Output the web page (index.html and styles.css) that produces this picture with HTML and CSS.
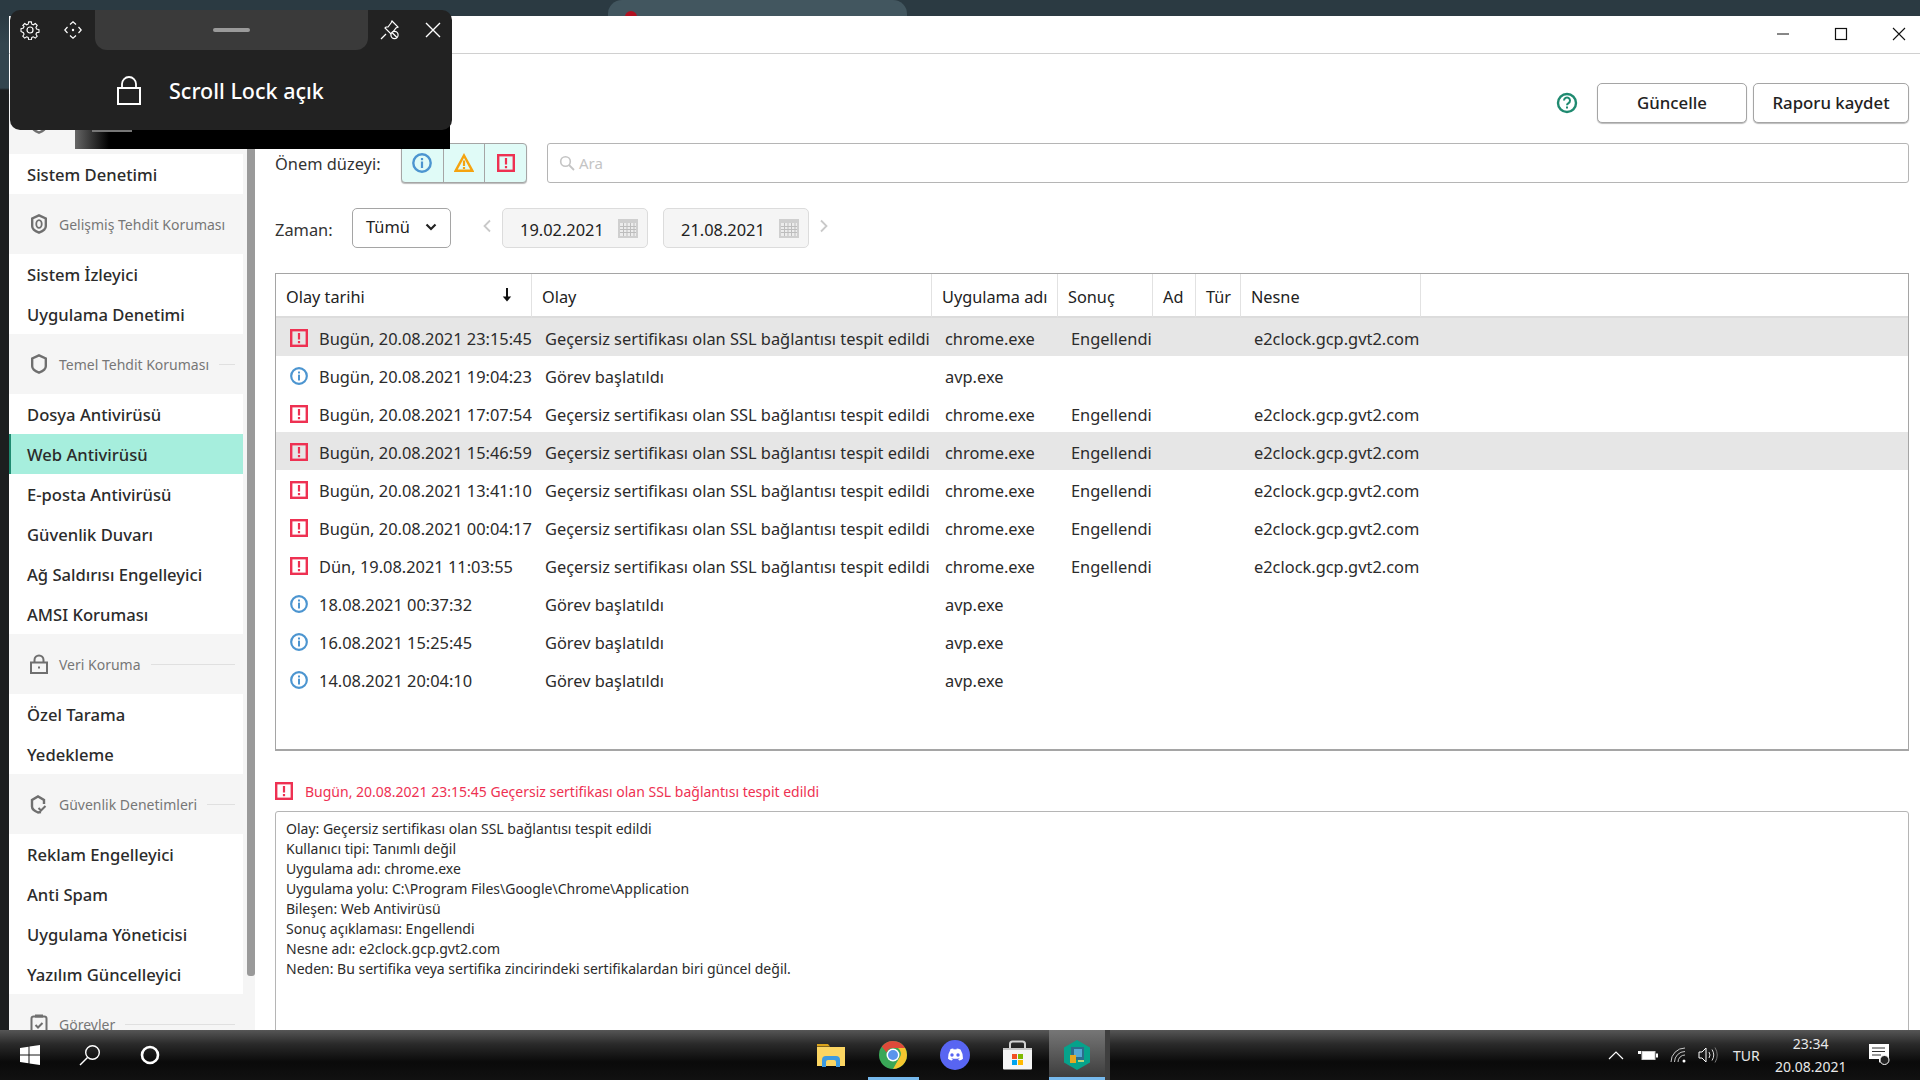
FILE: index.html
```html
<!DOCTYPE html>
<html lang="tr">
<head>
  <meta charset="UTF-8" />
  <title>Raporlar</title>
  <link rel="stylesheet" href="styles.css">
</head>
<body>
  <svg class="defs" width="0" height="0">
    <symbol id="i-err" viewBox="0 0 18 18">
      <rect x="1.200" y="1.200" width="15.600" height="15.600" fill="none" stroke="#ee3152" stroke-width="2.400"/>
      <rect x="7.900" y="4" width="2.200" height="6.500" fill="#ee3152"/>
      <rect x="7.900" y="12" width="2.200" height="2.200" fill="#ee3152"/>
    </symbol>
    <symbol id="i-info" viewBox="0 0 20 20">
      <circle cx="10" cy="10" r="8.700" fill="none" stroke="#4c95d0" stroke-width="2.400"/>
      <rect x="8.900" y="8.500" width="2.200" height="6.500" fill="#4c95d0"/>
      <rect x="8.900" y="5" width="2.200" height="2.200" fill="#4c95d0"/>
    </symbol>
    <symbol id="i-warn" viewBox="0 0 20 20">
      <path d="M10 2.500 18.400 17.800H1.600Z" fill="none" stroke="#f5a30f" stroke-width="2.400"/>
      <rect x="8.900" y="7.500" width="2.200" height="5.500" fill="#f5a30f"/>
      <rect x="8.900" y="14" width="2.200" height="2" fill="#f5a30f"/>
    </symbol>
    <symbol id="i-cal" viewBox="0 0 20 20">
      <path d="M0 1h20v19H0z" fill="#cfcfcf"/>
      <path d="M2 5h16v13H2z" fill="#ececec"/>
      <path d="M5.500 5v13M9 5v13M12.500 5v13M16 5v13M2 8.500h16M2 11.500h16M2 14.500h16" stroke="#bdbdbd" stroke-width="1"/>
    </symbol>
    <symbol id="i-shield" viewBox="0 0 18 22">
      <path d="M9 1.500 16.500 5v8.500c0 3-3.500 5.500-7.500 7-4-1.500-7.500-4-7.500-7V5Z" fill="none" stroke="#6f6f6f" stroke-width="2.600"/>
    </symbol>
  </svg>

  <div class="desktop">
    <div class="ghost-tab"><span class="ghost-icon"></span></div>
    <div class="window">
      <div class="titlebar">
        <svg class="win-btn" width="14" height="14" viewBox="0 0 14 14"><path d="M1 7h12" stroke="#111" stroke-width="1"/></svg>
        <svg class="win-btn" width="14" height="14" viewBox="0 0 14 14"><rect x="1.500" y="1.500" width="11" height="11" fill="none" stroke="#111" stroke-width="1.200"/></svg>
        <svg class="win-btn" width="14" height="14" viewBox="0 0 14 14"><path d="M1 1l12 12M13 1 1 13" stroke="#111" stroke-width="1.100"/></svg>
      </div>
      <div class="win-body">
        <nav class="sidebar">
          <div class="nav-list">
            <div class="nav-head">
              <svg class="nav-icon" viewBox="0 0 18 22"><use href="#i-shield"/></svg>
            </div>
            <div class="nav-item">Sistem Denetimi</div>
            <div class="nav-head">
              <svg class="nav-icon" viewBox="0 0 18 22">
                <path d="M9 1.500 16.500 5v8.500c0 3-3.500 5.500-7.500 7-4-1.500-7.500-4-7.500-7V5Z" fill="none" stroke="#6f6f6f" stroke-width="2.600"/>
                <ellipse cx="9" cy="11" rx="3" ry="4.200" fill="none" stroke="#6f6f6f" stroke-width="2"/>
              </svg>
              <span>Gelişmiş Tehdit Koruması</span>
            </div>
            <div class="nav-item">Sistem İzleyici</div>
            <div class="nav-item">Uygulama Denetimi</div>
            <div class="nav-head">
              <svg class="nav-icon" viewBox="0 0 18 22"><use href="#i-shield"/></svg>
              <span>Temel Tehdit Koruması</span><i></i>
            </div>
            <div class="nav-item">Dosya Antivirüsü</div>
            <div class="nav-item active">Web Antivirüsü</div>
            <div class="nav-item">E-posta Antivirüsü</div>
            <div class="nav-item">Güvenlik Duvarı</div>
            <div class="nav-item">Ağ Saldırısı Engelleyici</div>
            <div class="nav-item">AMSI Koruması</div>
            <div class="nav-head">
              <svg class="nav-icon" viewBox="0 0 18 20">
                <path d="M4.500 9V6a4.500 4.500 0 0 1 9 0v3" fill="none" stroke="#6f6f6f" stroke-width="2"/>
                <path d="M1 8.500h16V19H1z" fill="none" stroke="#6f6f6f" stroke-width="2"/>
                <rect x="8" y="12.500" width="2" height="2" fill="#6f6f6f"/>
              </svg>
              <span>Veri Koruma</span><i></i>
            </div>
            <div class="nav-item">Özel Tarama</div>
            <div class="nav-item">Yedekleme</div>
            <div class="nav-head">
              <svg class="nav-icon" viewBox="0 0 18 20">
                <path d="M11 18 8 18.500C4.500 17 2 15 2 12.500V6l6-3.500L14 6v4" fill="none" stroke="#6f6f6f" stroke-width="2.400"/>
                <path d="M8.500 14l2.500 2.500 4.500-4.500" fill="none" stroke="#6f6f6f" stroke-width="2"/>
              </svg>
              <span>Güvenlik Denetimleri</span><i></i>
            </div>
            <div class="nav-item">Reklam Engelleyici</div>
            <div class="nav-item">Anti Spam</div>
            <div class="nav-item">Uygulama Yöneticisi</div>
            <div class="nav-item">Yazılım Güncelleyici</div>
            <div class="nav-head">
              <svg class="nav-icon" viewBox="0 0 18 20">
                <rect x="1.500" y="2.500" width="15" height="16.500" rx="2" fill="none" stroke="#6f6f6f" stroke-width="2"/>
                <rect x="5" y="0.500" width="8" height="3" fill="#6f6f6f"/>
                <path d="M5.500 11l2.500 2.500 4.500-4.500" fill="none" stroke="#6f6f6f" stroke-width="2"/>
              </svg>
              <span>Görevler</span><i></i>
            </div>
          </div>
          <div class="scrollbar"><div class="scroll-thumb"></div></div>
        </nav>

        <main class="content">
          <div class="actions">
            <svg class="help" width="22" height="22" viewBox="0 0 22 22">
              <circle cx="11" cy="11" r="9" fill="none" stroke="#1f8a70" stroke-width="2.400"/>
              <path d="M8 8.500a3 3 0 1 1 4.500 2.600c-1 .6-1.500 1-1.500 2.200" fill="none" stroke="#1f8a70" stroke-width="2"/>
              <rect x="10" y="14.500" width="2" height="2" fill="#1f8a70"/>
            </svg>
            <button class="btn btn-update">Güncelle</button>
            <button class="btn btn-save">Raporu kaydet</button>
          </div>

          <div class="filter-row">
            <span class="label label-level">Önem düzeyi:</span>
            <div class="levels">
              <div class="level"><svg width="20" height="20"><use href="#i-info"/></svg></div>
              <div class="level"><svg width="20" height="20"><use href="#i-warn"/></svg></div>
              <div class="level"><svg width="18" height="18"><use href="#i-err"/></svg></div>
            </div>
            <div class="search">
              <svg width="16" height="16" viewBox="0 0 16 16"><circle cx="6.500" cy="6.500" r="4.800" fill="none" stroke="#c4c4c4" stroke-width="1.600"/><path d="M10 10l5 5" stroke="#c4c4c4" stroke-width="1.800"/></svg>
              <span>Ara</span>
            </div>
          </div>

          <div class="time-row">
            <span class="label label-time">Zaman:</span>
            <div class="select">
              <span>Tümü</span>
              <svg width="12" height="8" viewBox="0 0 12 8"><path d="M1.500 1.500 6 6l4.500-4.500" fill="none" stroke="#222" stroke-width="2.200"/></svg>
            </div>
            <svg class="chev" width="10" height="14" viewBox="0 0 10 14"><path d="M8 1.500 2.500 7 8 12.500" fill="none" stroke="#c9c9c9" stroke-width="1.800"/></svg>
            <div class="date"><span>19.02.2021</span><svg width="20" height="20"><use href="#i-cal"/></svg></div>
            <div class="date"><span>21.08.2021</span><svg width="20" height="20"><use href="#i-cal"/></svg></div>
            <svg class="chev" width="10" height="14" viewBox="0 0 10 14"><path d="M2 1.500 7.500 7 2 12.500" fill="none" stroke="#c9c9c9" stroke-width="1.800"/></svg>
          </div>

          <div class="table-box">
            <table class="events">
              <colgroup>
                <col class="c-date"><col class="c-event"><col class="c-app"><col class="c-result"><col class="c-ad"><col class="c-type"><col class="c-object"><col>
              </colgroup>
              <thead>
                <tr>
                  <th class="th-date">Olay tarihi
                    <svg class="sort" width="12" height="16" viewBox="0 0 12 16"><path d="M6 1v12" stroke="#111" stroke-width="2"/><path d="M1.800 9.500 6 14.500l4.200-5z" fill="#111"/></svg>
                  </th>
                  <th>Olay</th><th>Uygulama adı</th><th>Sonuç</th><th>Ad</th><th>Tür</th><th>Nesne</th><th class="th-rest"></th>
                </tr>
              </thead>
              <tbody>
                <tr class="sel">
                  <td class="td-date"><svg width="18" height="18"><use href="#i-err"/></svg>Bugün, 20.08.2021 23:15:45</td>
                  <td>Geçersiz sertifikası olan SSL bağlantısı tespit edildi</td><td>chrome.exe</td><td>Engellendi</td><td></td><td></td><td>e2clock.gcp.gvt2.com</td><td></td>
                </tr>
                <tr>
                  <td class="td-date"><svg width="18" height="18" viewBox="0 0 20 20"><use href="#i-info"/></svg>Bugün, 20.08.2021 19:04:23</td>
                  <td>Görev başlatıldı</td><td>avp.exe</td><td></td><td></td><td></td><td></td><td></td>
                </tr>
                <tr>
                  <td class="td-date"><svg width="18" height="18"><use href="#i-err"/></svg>Bugün, 20.08.2021 17:07:54</td>
                  <td>Geçersiz sertifikası olan SSL bağlantısı tespit edildi</td><td>chrome.exe</td><td>Engellendi</td><td></td><td></td><td>e2clock.gcp.gvt2.com</td><td></td>
                </tr>
                <tr class="sel">
                  <td class="td-date"><svg width="18" height="18"><use href="#i-err"/></svg>Bugün, 20.08.2021 15:46:59</td>
                  <td>Geçersiz sertifikası olan SSL bağlantısı tespit edildi</td><td>chrome.exe</td><td>Engellendi</td><td></td><td></td><td>e2clock.gcp.gvt2.com</td><td></td>
                </tr>
                <tr>
                  <td class="td-date"><svg width="18" height="18"><use href="#i-err"/></svg>Bugün, 20.08.2021 13:41:10</td>
                  <td>Geçersiz sertifikası olan SSL bağlantısı tespit edildi</td><td>chrome.exe</td><td>Engellendi</td><td></td><td></td><td>e2clock.gcp.gvt2.com</td><td></td>
                </tr>
                <tr>
                  <td class="td-date"><svg width="18" height="18"><use href="#i-err"/></svg>Bugün, 20.08.2021 00:04:17</td>
                  <td>Geçersiz sertifikası olan SSL bağlantısı tespit edildi</td><td>chrome.exe</td><td>Engellendi</td><td></td><td></td><td>e2clock.gcp.gvt2.com</td><td></td>
                </tr>
                <tr>
                  <td class="td-date"><svg width="18" height="18"><use href="#i-err"/></svg>Dün, 19.08.2021 11:03:55</td>
                  <td>Geçersiz sertifikası olan SSL bağlantısı tespit edildi</td><td>chrome.exe</td><td>Engellendi</td><td></td><td></td><td>e2clock.gcp.gvt2.com</td><td></td>
                </tr>
                <tr>
                  <td class="td-date"><svg width="18" height="18" viewBox="0 0 20 20"><use href="#i-info"/></svg>18.08.2021 00:37:32</td>
                  <td>Görev başlatıldı</td><td>avp.exe</td><td></td><td></td><td></td><td></td><td></td>
                </tr>
                <tr>
                  <td class="td-date"><svg width="18" height="18" viewBox="0 0 20 20"><use href="#i-info"/></svg>16.08.2021 15:25:45</td>
                  <td>Görev başlatıldı</td><td>avp.exe</td><td></td><td></td><td></td><td></td><td></td>
                </tr>
                <tr>
                  <td class="td-date"><svg width="18" height="18" viewBox="0 0 20 20"><use href="#i-info"/></svg>14.08.2021 20:04:10</td>
                  <td>Görev başlatıldı</td><td>avp.exe</td><td></td><td></td><td></td><td></td><td></td>
                </tr>
              </tbody>
            </table>
          </div>

          <div class="detail-title">
            <svg width="18" height="18"><use href="#i-err"/></svg>
            <span>Bugün, 20.08.2021 23:15:45 Geçersiz sertifikası olan SSL bağlantısı tespit edildi</span>
          </div>
          <div class="detail-box">
            <div>Olay: Geçersiz sertifikası olan SSL bağlantısı tespit edildi</div>
            <div>Kullanıcı tipi: Tanımlı değil</div>
            <div>Uygulama adı: chrome.exe</div>
            <div>Uygulama yolu: C:\Program Files\Google\Chrome\Application</div>
            <div>Bileşen: Web Antivirüsü</div>
            <div>Sonuç açıklaması: Engellendi</div>
            <div>Nesne adı: e2clock.gcp.gvt2.com</div>
            <div>Neden: Bu sertifika veya sertifika zincirindeki sertifikalardan biri güncel değil.</div>
          </div>
        </main>
      </div>
    </div>
  </div>

  <div class="taskbar">
    <div class="tb-left">
      <svg class="tb-start" width="20" height="20" viewBox="0 0 20 20"><path d="M0 3l8.500-1.200v7.700H0zM9.500 1.600 20 0v9.500H9.500zM0 10.500h8.500v7.700L0 17zM9.500 10.500H20V20L9.500 18.400z" fill="#fff"/></svg>
      <svg class="tb-search" width="22" height="22" viewBox="0 0 22 22"><circle cx="13.500" cy="8.500" r="6.800" fill="none" stroke="#fff" stroke-width="1.400"/><path d="M8.500 13.500 1 21" stroke="#fff" stroke-width="1.500"/></svg>
      <svg class="tb-cortana" width="20" height="20" viewBox="0 0 20 20"><circle cx="10" cy="10" r="8" fill="none" stroke="#fff" stroke-width="2.600"/></svg>
    </div>
    <div class="tb-apps">
      <div class="tb-app">
        <svg width="28" height="24" viewBox="0 0 28 24">
          <path d="M0 1h11l2 2.500H0z" fill="#d9a21b"/>
          <rect x="0" y="4" width="28" height="19" fill="#fbd562"/>
          <path d="M5 24v-7q0-4 4-4h10q4 0 4 4v7h-4v-5q0-2-2-2h-6q-2 0-2 2v5z" fill="#3d9ae0"/>
        </svg>
      </div>
      <div class="tb-app open">
        <svg width="28" height="28" viewBox="0 0 28 28">
          <circle cx="14" cy="14" r="14" fill="#3aa757"/>
          <path d="M14 0a14 14 0 0 1 12.100 7H14a7 7 0 0 0-6.500 4.400L2.800 5.600A14 14 0 0 1 14 0z" fill="#de4a3a"/>
          <path d="M26.100 7A14 14 0 0 1 14 28l6-10.500A7 7 0 0 0 19 7z" fill="#f6c62f"/>
          <circle cx="14" cy="14" r="6.500" fill="#fff"/>
          <circle cx="14" cy="14" r="5" fill="#5a95ec"/>
        </svg>
      </div>
      <div class="tb-app">
        <svg width="30" height="30" viewBox="0 0 30 30">
          <circle cx="15" cy="15" r="15" fill="#5865f2"/>
          <path d="M9.500 9.500q2.500-1.100 3.700-1.100l.5 1q1.300-.2 2.600 0l.5-1q1.300 0 3.700 1.100 2.400 3.600 2.500 9.300-1.700 1.400-3.900 1.800l-1-1.500 1.600-.9-.4-.3q-3.800 1.700-7.600 0l-.4.3 1.600.9-1 1.500q-2.200-.4-3.900-1.800.1-5.700 2.500-9.300z" fill="#fff"/>
          <circle cx="12" cy="15" r="1.700" fill="#5865f2"/>
          <circle cx="18" cy="15" r="1.700" fill="#5865f2"/>
        </svg>
      </div>
      <div class="tb-app">
        <svg width="29" height="30" viewBox="0 0 29 30">
          <path d="M7 9V4q0-2.500 2.500-2.500h10q2.500 0 2.500 2.500v5" fill="none" stroke="#d2d2d2" stroke-width="2"/>
          <path d="M0 9h29v19.500q0 1-1 1H1q-1 0-1-1z" fill="#f5f5f5"/>
          <rect x="0" y="8" width="29" height="2" fill="#c8c8c8"/>
          <rect x="9" y="14" width="5" height="5" fill="#f25022"/>
          <rect x="15" y="14" width="5" height="5" fill="#7fba00"/>
          <rect x="9" y="20" width="5" height="5" fill="#00a4ef"/>
          <rect x="15" y="20" width="5" height="5" fill="#ffb900"/>
        </svg>
      </div>
      <div class="tb-app active">
        <svg width="28" height="30" viewBox="0 0 28 30">
          <path d="M14 0 27 7.500v15L14 30 1 22.500v-15z" fill="#06a28b"/>
          <rect x="8" y="7" width="13" height="13" fill="#2c6d8c"/>
          <rect x="11" y="9" width="8" height="8" fill="#56a9d4"/>
          <rect x="7" y="15" width="6" height="8" fill="#e5a823"/>
          <rect x="15" y="20" width="6" height="2" fill="#b7d27a"/>
        </svg>
      </div>
    </div>
    <div class="tray">
      <svg class="tray-chev" width="16" height="10" viewBox="0 0 16 10"><path d="M1 9l7-7 7 7" fill="none" stroke="#fff" stroke-width="1.200"/></svg>
      <svg class="tray-bat" width="20" height="12" viewBox="0 0 20 12"><rect x="4" y="2.500" width="13" height="8" fill="#fff" stroke="#ccc"/><rect x="18" y="4.500" width="2" height="4" fill="#fff"/><path d="M0 2h3v3H0z" fill="#fff"/></svg>
      <svg class="tray-wifi" width="18" height="16" viewBox="0 0 18 16"><path d="M1 15A14 14 0 0 1 15 1M4.500 15A10.500 10.500 0 0 1 15 4.500M8 15a7 7 0 0 1 7-7" fill="none" stroke="#c8c8c8" stroke-width="1"/><circle cx="14" cy="14" r="1.500" fill="#fff"/></svg>
      <svg class="tray-vol" width="20" height="16" viewBox="0 0 20 16"><path d="M1 5h3l4-4v14l-4-4H1z" fill="none" stroke="#fff" stroke-width="1"/><path d="M11 5q2 3 0 6M14 2.500q3.500 5.500 0 11" fill="none" stroke="#ddd" stroke-width="1"/><path d="M17 .5q4.500 7.500 0 15" fill="none" stroke="#777" stroke-width="1"/></svg>
      <span class="tray-lang">TUR</span>
      <div class="clock"><span>23:34</span><span>20.08.2021</span></div>
      <svg class="tray-note" width="21" height="22" viewBox="0 0 21 22"><path d="M0 0h20v15H13l-3 4v-4H0z" fill="#fff"/><path d="M3 4h13M3 7.500h13M3 11h9" stroke="#333" stroke-width="1"/><circle cx="15.500" cy="16" r="4.500" fill="#222" stroke="#fff" stroke-width="1"/></svg>
    </div>
  </div>

  <div class="black-bar"></div>
  <div class="lock-flyout">
    <div class="fly-top">
      <svg class="fly-gear" width="20" height="20" viewBox="0 0 20 20">
        <path d="M8.500 1h3l.5 2.500 1.700.7L15.900 2.800l2.100 2.100-1.400 2.200.7 1.700 2.700.7v3l-2.700.5-.7 1.700 1.400 2.200-2.100 2.100-2.200-1.400-1.700.7-.5 2.500h-3l-.5-2.500-1.700-.7-2.200 1.400-2.100-2.100 1.400-2.200-.7-1.700L0 11.500v-3l2.700-.7.7-1.700L2 4.900 4.100 2.800l2.200 1.400L8 3.500z" fill="none" stroke="#fff" stroke-width="1.200" transform="translate(1 1) scale(.9)"/>
        <circle cx="10" cy="10" r="3" fill="none" stroke="#fff" stroke-width="1.200"/>
      </svg>
      <svg class="fly-move" width="18" height="18" viewBox="0 0 18 18">
        <path d="M6 3.500 9 .8l3 2.700M3.500 6 .8 9l2.700 3M14.500 6 17.200 9l-2.700 3M6 14.500l3 2.700 3-2.700" fill="none" stroke="#fff" stroke-width="1.200"/>
        <circle cx="9" cy="9" r="1.200" fill="#fff"/>
      </svg>
      <div class="fly-handle"><div class="grip"></div></div>
      <svg class="fly-pin" width="20" height="20" viewBox="0 0 20 20">
        <path d="M12 1l6 6-2 1-3 4v2l-1 1-7-7 1-1h2l3-4z" fill="none" stroke="#fff" stroke-width="1.200"/>
        <path d="M1 19l5-5" stroke="#fff" stroke-width="1.200"/>
        <circle cx="14.500" cy="15" r="3.600" fill="#222" stroke="#fff" stroke-width="1.200"/>
        <path d="M12 12.500l5 5" stroke="#fff" stroke-width="1.200"/>
      </svg>
      <svg class="fly-close" width="16" height="16" viewBox="0 0 16 16"><path d="M1 1l14 14M15 1 1 15" stroke="#fff" stroke-width="1.400"/></svg>
    </div>
    <div class="fly-msg">
      <svg width="24" height="30" viewBox="0 0 24 30">
        <path d="M5 14V9a7 7 0 0 1 14 0v5" fill="none" stroke="#fff" stroke-width="1.800"/>
        <rect x="1" y="13" width="22" height="16" fill="none" stroke="#fff" stroke-width="2"/>
      </svg>
      <span>Scroll Lock açık</span>
    </div>
  </div>
</body>
</html>
```

FILE: styles.css
```css
* {
  box-sizing: border-box;
}

html, body {
  margin: 0;
  height: 100%;
}

body {
  width: 1920px;
  height: 1080px;
  overflow: hidden;
  display: flex;
  flex-direction: column;
  background-color: #1c1e1f;
  font-family: "Noto Sans", "Open Sans", sans-serif;
  color: #222;
}

.defs {
  position: absolute;
}

/* desktop + app window */
.desktop {
  height: 1030px;
  padding: 16px 0 0 9px;
  position: relative;
  background: linear-gradient(180deg, #2b3a42 0, #2b3a42 16px, #33454e 44px, #33454e 88px, #1c1e1f 90px);
}

.ghost-tab {
  position: absolute;
  left: 608px;
  top: 0;
  width: 299px;
  height: 16px;
  background-color: #42565f;
  border-radius: 14px 14px 0 0;
  overflow: hidden;
}

.ghost-icon {
  position: absolute;
  left: 17px;
  top: 11px;
  width: 12px;
  height: 12px;
  border-radius: 50%;
  background-color: #b01020;
}

.window {
  position: relative;
  height: 1014px;
  background-color: #fff;
  display: flex;
  flex-direction: column;
  overflow: hidden;
}

.titlebar {
  height: 38px;
  flex-shrink: 0;
  border-bottom: 1px solid #d0d0d0;
  display: flex;
  justify-content: flex-end;
  align-items: center;
  gap: 44px;
  padding: 0 14px 2px 0;
}

.win-body {
  flex: 1;
  display: flex;
  min-height: 0;
}

/* left menu */
.sidebar {
  width: 246px;
  flex-shrink: 0;
  display: flex;
  background-color: #f5f5f5;
  overflow: hidden;
}

.nav-list {
  width: 234px;
  padding-top: 40px;
  background-color: #fff;
}

.nav-item {
  height: 40px;
  padding-left: 18px;
  display: flex;
  align-items: center;
  font-size: 16.600px;
  font-weight: 500;
  color: #2b2b2b;
}

.nav-item.active {
  background-color: #a6eedd;
  border-left: 2px solid #1f8a70;
  padding-left: 16px;
}

.nav-head {
  height: 60px;
  padding: 0 8px 0 21px;
  background-color: #f5f5f5;
  display: flex;
  align-items: center;
  font-size: 14px;
  color: #777;
}

.nav-icon {
  width: 18px;
  height: 20px;
  flex-shrink: 0;
  margin-right: 11px;
}

.nav-head i {
  flex: 1;
  height: 1px;
  margin-left: 10px;
  background-color: #e0e0e0;
}

.scrollbar {
  width: 12px;
  padding: 0 0 0 4px;
}

.scroll-thumb {
  width: 8px;
  height: 922px;
  background-color: #9a9a9a;
  border-radius: 0 0 3px 3px;
}

/* main part */
.content {
  flex: 1;
  min-width: 0;
  padding: 29px 11px 0 20px;
  overflow: hidden;
}

.actions {
  height: 40px;
  display: flex;
  justify-content: flex-end;
  align-items: center;
  gap: 6px;
}

.help {
  margin-right: 13px;
}

.btn {
  height: 40px;
  padding-bottom: 3px;
  background-color: #fff;
  border: 1px solid #a5a5a5;
  border-radius: 5px;
  box-shadow: 0 1px 1px #bbb;
  font-family: inherit;
  font-size: 16.800px;
  font-weight: 500;
  color: #222;
}

.btn-update {
  width: 150px;
}

.btn-save {
  width: 156px;
}

.label {
  font-size: 16.400px;
  color: #333;
  flex-shrink: 0;
}

.filter-row {
  margin-top: 20px;
  height: 40px;
  display: flex;
  align-items: center;
}

.label-level {
  width: 126px;
}

.levels {
  width: 126px;
  height: 40px;
  display: flex;
  background-color: #e0fbf7;
  border: 1px solid #a5a5a5;
  border-radius: 4px;
  box-shadow: 0 1px 1px #bbb;
}

.level {
  flex: 1;
  display: flex;
  align-items: center;
  justify-content: center;
  border-left: 1px solid #a5a5a5;
}

.level:first-child {
  border-left: none;
}

.search {
  flex: 1;
  height: 40px;
  margin-left: 20px;
  padding-left: 11px;
  display: flex;
  align-items: center;
  gap: 4px;
  border: 1px solid #b5b5b5;
  border-radius: 3px;
  font-size: 15px;
  color: #c4c4c4;
}

.time-row {
  margin-top: 25px;
  height: 40px;
  display: flex;
  align-items: center;
}

.label-time {
  width: 77px;
  padding-top: 2px;
}

.select {
  width: 99px;
  height: 40px;
  padding: 0 13px 3px 13px;
  display: flex;
  align-items: center;
  justify-content: space-between;
  border: 1px solid #a5a5a5;
  border-radius: 5px;
  font-size: 16.400px;
}

.chev {
  flex-shrink: 0;
  margin: 0 10px 4px 31px;
}

.date {
  width: 146px;
  height: 40px;
  padding: 2px 9px 0 17px;
  display: flex;
  align-items: center;
  justify-content: space-between;
  background-color: #f5f5f5;
  border: 1px solid #dcdcdc;
  border-radius: 5px;
  font-size: 16.400px;
  color: #222;
}

.date svg {
  margin-top: -2px;
}

.date + .date {
  margin-left: 15px;
}

.date + .chev {
  margin: 0 0 4px 10px;
}

/* event table */
.table-box {
  margin-top: 25px;
  height: 478px;
  border: 1px solid #a5a5a5;
  border-bottom-width: 2px;
}

.events {
  width: 100%;
  table-layout: fixed;
  border-collapse: separate;
  border-spacing: 0;
  font-size: 16.400px;
}

.c-date { width: 256px; }
.c-event { width: 400px; }
.c-app { width: 126px; }
.c-result { width: 95px; }
.c-ad { width: 43px; }
.c-type { width: 45px; }
.c-object { width: 180px; }

.events th {
  height: 44px;
  padding: 3px 0 0 10px;
  position: relative;
  text-align: left;
  font-weight: 400;
  font-size: 16.300px;
  color: #222;
  border-right: 1px solid #e2e2e2;
  border-bottom: 2px solid #dcdcdc;
}

.events th.th-rest {
  border-right: none;
}

.sort {
  position: absolute;
  right: 18px;
  top: 13px;
}

.events td {
  height: 38px;
  padding: 2px 0 0 13px;
  white-space: nowrap;
  overflow: hidden;
  color: #2b2b2b;
}

.events td.td-date {
  padding-left: 14px;
}

.td-date svg {
  margin-right: 11px;
  vertical-align: -2px;
}

.events tr.sel td {
  background-color: #e6e6e6;
}

.detail-title {
  margin-top: 30px;
  height: 20px;
  display: flex;
  align-items: center;
  gap: 12px;
  font-size: 14px;
  color: #ee3152;
}

.detail-box {
  margin-top: 10px;
  height: 240px;
  padding: 7px 10px;
  border: 1px solid #b5b5b5;
  border-radius: 3px;
  font-size: 14px;
  line-height: 20px;
  color: #2b2b2b;
}

/* taskbar */
.taskbar {
  height: 50px;
  position: relative;
  z-index: 5;
  display: flex;
  align-items: stretch;
  background: linear-gradient(180deg, #565656 0, #2a2a2a 14px, #0a0a0a 32px, #111 100%);
  color: #eee;
}

.tb-left {
  width: 800px;
  display: flex;
  align-items: center;
  padding-left: 20px;
}

.tb-search {
  margin-left: 39px;
}

.tb-cortana {
  margin-left: 39px;
}

.tb-apps {
  display: flex;
}

.tb-app {
  width: 62px;
  display: flex;
  align-items: center;
  justify-content: center;
}

.tb-app.open {
  background: linear-gradient(#76b9ed, #76b9ed) bottom center / 51px 3px no-repeat;
}

.tb-app.active {
  width: 56px;
  margin-left: 1px;
  background: linear-gradient(#76b9ed, #76b9ed) bottom center / 100% 3px no-repeat, linear-gradient(180deg, #767676 0, #3a3a3a 100%);
  box-shadow: 5px 0 0 #3e3e3e;
}

.tray {
  flex: 1;
  display: flex;
  align-items: center;
  position: relative;
  padding-left: 503px;
  font-size: 14px;
}

.tray-bat { margin-left: 14px; }
.tray-wifi { margin-left: 12px; }
.tray-vol { margin-left: 10px; }

.tray-lang {
  margin-left: 15px;
  color: #e8e8e8;
}

.clock {
  width: 90px;
  margin-left: 6px;
  display: flex;
  flex-direction: column;
  align-items: center;
  line-height: 23px;
  color: #e8e8e8;
}

.tray-note {
  margin-left: 13px;
}

/* scroll lock flyout lies over the window */
.black-bar {
  position: absolute;
  left: 75px;
  top: 100px;
  width: 375px;
  height: 49px;
  background: linear-gradient(#777, #777) 17px 30px / 40px 2px no-repeat, linear-gradient(90deg, #666 0, #000 34px);
}

.lock-flyout {
  position: absolute;
  left: 10px;
  top: 10px;
  width: 442px;
  height: 120px;
  background-color: #222;
  border-radius: 10px;
  color: #fff;
}

.fly-top {
  height: 40px;
  display: flex;
  align-items: center;
}

.fly-gear {
  margin-left: 10px;
}

.fly-move {
  margin-left: 24px;
}

.fly-handle {
  width: 273px;
  height: 40px;
  margin-left: 13px;
  display: flex;
  align-items: center;
  justify-content: center;
  background-color: #3a3a3a;
  border-radius: 0 0 12px 12px;
}

.grip {
  width: 37px;
  height: 4px;
  border-radius: 2px;
  background-color: #9a9a9a;
}

.fly-pin {
  margin-left: 12px;
}

.fly-close {
  margin-left: 25px;
}

.fly-msg {
  height: 80px;
  padding-left: 107px;
  display: flex;
  align-items: center;
  gap: 28px;
  font-size: 21.500px;
  font-weight: 500;
}
```
